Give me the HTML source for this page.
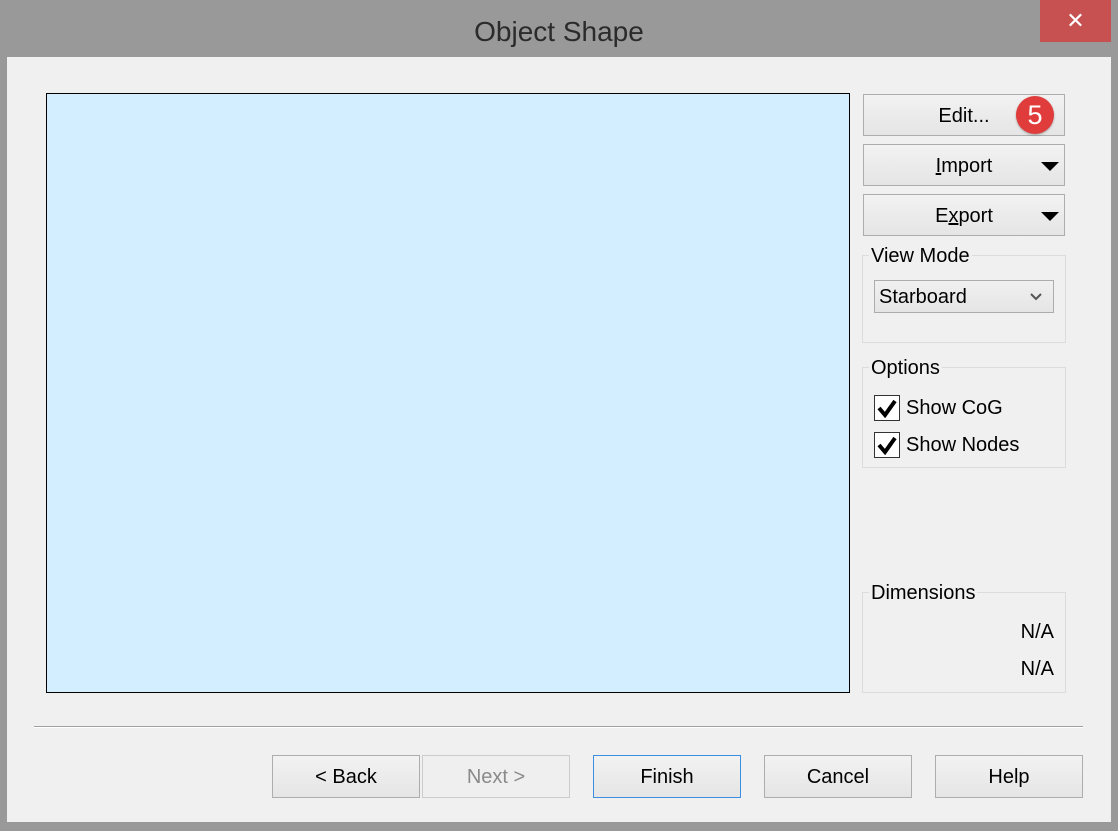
<!DOCTYPE html><html><head><style>
body{margin:0;width:1118px;height:831px;background:#999;font-family:"Liberation Sans",sans-serif;position:relative;overflow:hidden}
div{position:absolute;box-sizing:border-box}
.t{left:0;top:0;width:1118px;height:57px;text-align:center;font-size:28px;color:#2b2b2b;line-height:63px}
.x{left:1040px;top:0;width:71px;height:42px;background:#c75050;color:#fff;font-size:22px;text-align:center;line-height:42px}
.c{left:7px;top:57px;width:1104px;height:765px;background:#f0f0f0}
.btn{border:1px solid #adadad;background:linear-gradient(#f2f2f2,#e5e5e5);font-size:20px;text-align:center;color:#000}
.grp{border:1px solid #dcdcdc}
.lbl{font-size:20px;color:#000;background:#f0f0f0;padding:0 2px}
.tri{width:0;height:0;border-left:9px solid transparent;border-right:9px solid transparent;border-top:9px solid #000}
.cb{width:26px;height:26px;border:1px solid #333;background:#fff}
</style></head><body>
<div class="t">Object Shape</div>
<div class="x">✕</div>
<div class="c"></div>
<div style="left:46px;top:93px;width:804px;height:600px;background:#d3efff;border:1px solid #000"></div>
<div class="btn" style="left:863px;top:94px;width:202px;height:42px;line-height:42px">Edit...</div>
<div style="left:1016px;top:96px;width:38px;height:38px;border-radius:50%;background:#e03c3c;color:#fff;font-size:27px;text-align:center;line-height:38px;box-shadow:0 1px 2px rgba(0,0,0,.3)">5</div>
<div class="btn" style="left:863px;top:144px;width:202px;height:42px;line-height:42px"><u>I</u>mport</div>
<div class="tri" style="left:1041px;top:162px"></div>
<div class="btn" style="left:863px;top:194px;width:202px;height:42px;line-height:42px">E<u>x</u>port</div>
<div class="tri" style="left:1041px;top:212px"></div>
<div class="grp" style="left:862px;top:255px;width:204px;height:88px"></div>
<div class="lbl" style="left:869px;top:245px">View Mode</div>
<div style="left:874px;top:280px;width:180px;height:33px;border:1px solid #acacac;background:linear-gradient(#f0f0f0,#e5e5e5);font-size:20px;line-height:33px;padding-left:4px">Starboard<svg style="position:absolute;right:11px;top:12px" width="12" height="8"><path d="M1 1 L6 6 L11 1" stroke="#555" stroke-width="2" fill="none"/></svg></div>
<div class="grp" style="left:862px;top:367px;width:204px;height:101px"></div>
<div class="lbl" style="left:869px;top:357px">Options</div>
<div class="cb" style="left:874px;top:395px"></div><svg style="position:absolute;left:877px;top:398px" width="20" height="20"><path d="M2 10 L8 17 L18 3" stroke="#000" stroke-width="4" fill="none"/></svg>
<div style="left:906px;top:397px;font-size:20px">Show CoG</div>
<div class="cb" style="left:874px;top:432px"></div><svg style="position:absolute;left:877px;top:435px" width="20" height="20"><path d="M2 10 L8 17 L18 3" stroke="#000" stroke-width="4" fill="none"/></svg>
<div style="left:906px;top:434px;font-size:20px">Show Nodes</div>
<div class="grp" style="left:862px;top:592px;width:204px;height:101px"></div>
<div class="lbl" style="left:869px;top:582px">Dimensions</div>
<div style="left:990px;top:621px;width:64px;text-align:right;font-size:20px">N/A</div>
<div style="left:990px;top:658px;width:64px;text-align:right;font-size:20px">N/A</div>
<div style="left:34px;top:726px;width:1049px;height:2px;border-top:1px solid #a0a0a0;border-bottom:1px solid #fff"></div>
<div class="btn" style="left:272px;top:755px;width:148px;height:43px;line-height:43px">&lt; Back</div>
<div class="btn" style="left:422px;top:755px;width:148px;height:43px;line-height:43px;color:#8a8a8a;border-color:#ccc;background:#efefef">Next &gt;</div>
<div class="btn" style="left:593px;top:755px;width:148px;height:43px;line-height:43px;border-color:#3c8fe0">Finish</div>
<div class="btn" style="left:764px;top:755px;width:148px;height:43px;line-height:43px">Cancel</div>
<div class="btn" style="left:935px;top:755px;width:148px;height:43px;line-height:43px">Help</div>
</body></html>
